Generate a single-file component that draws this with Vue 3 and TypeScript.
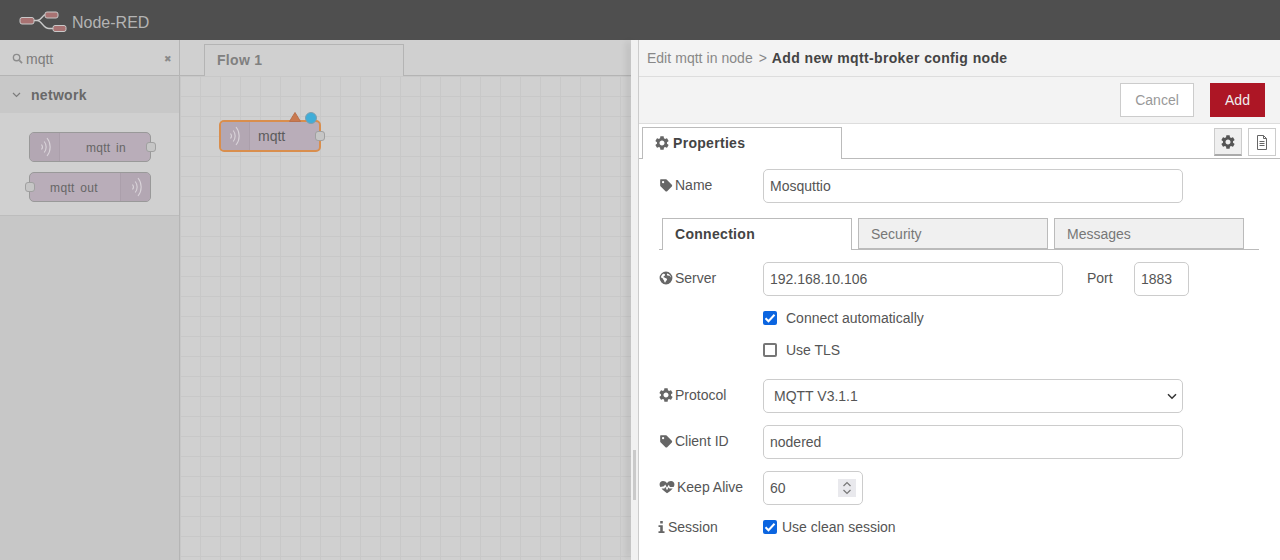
<template>
  <div class="app">
    <header class="topbar">
      <svg class="logo" width="50" height="22" viewBox="0 0 50 22">
        <path d="M15 9.500h3c5 0 5-6 9-6h3M18 9.500c5 0 6 8 12 8h4" fill="none" stroke="#c9c9c9" stroke-width="1.300" />
        <rect x="1" y="6.500" width="14" height="6.500" rx="2" fill="#a87272" stroke="#c9c9c9" stroke-width="1" />
        <rect x="26" y="1" width="13" height="6" rx="2" fill="#a87272" stroke="#c9c9c9" stroke-width="1" />
        <rect x="34" y="14.500" width="13" height="6" rx="2" fill="#a87272" stroke="#c9c9c9" stroke-width="1" />
      </svg>
      <span class="brand">Node-RED</span>
    </header>

    <div class="main">
      <aside class="palette">
        <div class="palette-search">
          <svg width="11" height="11" viewBox="0 0 12 12"><circle cx="5" cy="5" r="3.500" fill="none" stroke="#8c8c8c" stroke-width="1.500" /><path d="M8 8l3 3" stroke="#8c8c8c" stroke-width="1.800" /></svg>
          <span class="search-text">mqtt</span>
          <span class="search-clear">✖</span>
        </div>
        <div class="palette-head">
          <svg width="9" height="6" viewBox="0 0 9 6"><path d="M1 1l3.500 3.500L8 1" fill="none" stroke="#7c7c7c" stroke-width="1.200" /></svg>
          <span>network</span>
        </div>
        <div class="palette-body">
          <div class="pnode">
            <span class="wave-box"><svg class="wave" width="12" height="22" viewBox="0 0 12 22"><path :d="wavePath" /></svg></span>
            <span class="pnode-label pnode-in">mqtt in</span>
            <span class="port port-right"></span>
          </div>
          <div class="pnode">
            <span class="port port-left"></span>
            <span class="pnode-label pnode-out">mqtt out</span>
            <span class="wave-box wave-box-right"><svg class="wave" width="12" height="22" viewBox="0 0 12 22"><path :d="wavePath" /></svg></span>
          </div>
        </div>
      </aside>

      <section class="workspace">
        <div class="ws-tabs"><div class="ws-tab">Flow 1</div></div>
        <div class="canvas">
          <div class="flow-node">
            <span class="wave-box"><svg class="wave" width="12" height="22" viewBox="0 0 12 22"><path :d="wavePath" /></svg></span>
            <span class="flow-label">mqtt</span>
            <span class="port flow-port"></span>
            <svg class="flow-warn" width="12" height="10" viewBox="0 0 12 10"><path d="M6 .5l5.500 9H.5z" fill="#c9794f" stroke="#b8704c" /></svg>
            <span class="flow-dot"></span>
          </div>
        </div>
      </section>

      <div class="splitter"><span class="grip"></span></div>

      <section class="tray">
        <div class="crumbs">
          <span>Edit mqtt in node</span>
          <span class="crumb-sep">&gt;</span>
          <b>Add new mqtt-broker config node</b>
        </div>
        <div class="actions">
          <button class="btn">Cancel</button>
          <button class="btn btn-primary">Add</button>
        </div>
        <div class="tray-tabs">
          <div class="tray-tab">
            <svg class="ico" viewBox="2 2 20 20"><path :d="icons.cog" /></svg>
            Properties
          </div>
          <div class="tray-side">
            <span class="side-btn side-btn-on"><svg class="ico ico-dark" viewBox="2 2 20 20"><path :d="icons.cog" /></svg></span>
            <span class="side-btn">
              <svg width="12" height="15" viewBox="0 0 12 15"><path d="M1.500.5h6l3 3v11h-9zM7.500.5v3h3M3.500 6.500h5M3.500 8.500h5M3.500 10.500h5" fill="none" stroke="#666" /></svg>
            </span>
          </div>
        </div>

        <div class="form">
          <div class="row">
            <label class="lbl"><svg class="ico" viewBox="0 0 24 24"><path :d="icons.tag" fill-rule="evenodd" /></svg>Name</label>
            <input class="field w420" value="Mosquttio" />
          </div>

          <div class="subtabs">
            <div v-for="(t, i) in subTabs" :key="t" class="subtab" :class="{ active: i === 0 }">{{ t }}</div>
          </div>

          <div class="row">
            <label class="lbl"><svg class="ico" viewBox="0 0 24 24"><path :d="icons.globe" fill-rule="evenodd" /></svg>Server</label>
            <input class="field w300" value="192.168.10.106" />
            <span class="port-label">Port</span>
            <input class="field w55" value="1883" />
          </div>

          <div class="check-row first">
            <span class="box on"><svg width="14" height="14" viewBox="0 0 14 14"><path :d="tick" fill="none" stroke="#fff" stroke-width="2" /></svg></span>
            <span>Connect automatically</span>
          </div>
          <div class="check-row">
            <span class="box"></span>
            <span>Use TLS</span>
          </div>

          <div class="row gap-protocol">
            <label class="lbl"><svg class="ico" viewBox="2 2 20 20"><path :d="icons.cog" /></svg>Protocol</label>
            <div class="field w420 select">
              <span>MQTT V3.1.1</span>
              <svg width="10" height="7" viewBox="0 0 10 7"><path d="M1 1.200l4 4 4-4" fill="none" stroke="#333" stroke-width="1.500" /></svg>
            </div>
          </div>
          <div class="row gap12">
            <label class="lbl"><svg class="ico" viewBox="0 0 24 24"><path :d="icons.tag" fill-rule="evenodd" /></svg>Client ID</label>
            <input class="field w420" value="nodered" />
          </div>
          <div class="row gap12">
            <label class="lbl"><svg class="ico ico-wide" viewBox="0 0 28 24"><path :d="icons.heartbeat" /></svg>Keep Alive</label>
            <div class="field w100 number">
              <span>60</span>
              <span class="spin">
                <svg width="10" height="16" viewBox="0 0 10 16"><path d="M1.500 6L5 2.500 8.500 6M1.500 10L5 13.500 8.500 10" fill="none" stroke="#777" stroke-width="1.200" /></svg>
              </span>
            </div>
          </div>
          <div class="row session">
            <label class="lbl"><svg class="ico ico-info" viewBox="0 0 8 14"><path :d="icons.info" /></svg>Session</label>
            <span class="box on"><svg width="14" height="14" viewBox="0 0 14 14"><path :d="tick" fill="none" stroke="#fff" stroke-width="2" /></svg></span>
            <span class="session-text">Use clean session</span>
          </div>
        </div>
      </section>
    </div>
  </div>
</template>

<script setup lang="ts">
const subTabs: string[] = ["Connection", "Security", "Messages"];

const wavePath = "M2.500 8.500c1.200 1.500 1.200 3.500 0 5M5.200 5.500c2.600 3.200 2.600 7.800 0 11M8 2c4.200 5 4.200 13 0 18";
const tick = "M2.500 7.200l3 3 6-6.400";

// icon shapes drawn by hand, same glyphs as the editor uses
const icons: Record<string, string> = {
  cog: "M19.140 12.940c.04-.3.06-.61.06-.94 0-.32-.02-.64-.07-.94l2.030-1.580c.18-.14.23-.41.12-.61l-1.920-3.320c-.12-.22-.37-.29-.59-.22l-2.390.96c-.5-.38-1.030-.7-1.620-.94l-.36-2.540c-.04-.24-.24-.41-.48-.41h-3.840c-.24 0-.43.17-.47.41l-.36 2.540c-.59.24-1.130.57-1.620.94l-2.390-.96c-.22-.08-.47 0-.59.22L2.740 8.870c-.12.21-.08.47.12.61l2.030 1.580c-.05.3-.09.63-.09.94s.02.64.07.94l-2.030 1.580c-.18.14-.23.41-.12.61l1.920 3.320c.12.22.37.29.59.22l2.390-.96c.5.38 1.030.7 1.620.94l.36 2.540c.05.24.24.41.48.41h3.840c.24 0 .44-.17.47-.41l.36-2.540c.59-.24 1.130-.56 1.620-.94l2.390.96c.22.08.47 0 .59-.22l1.920-3.320c.12-.22.07-.47-.12-.61l-2.010-1.580zM12 15.600c-1.980 0-3.600-1.620-3.600-3.600s1.620-3.600 3.600-3.600 3.600 1.620 3.600 3.600-1.620 3.600-3.600 3.600z",
  tag: "M3 2h8.500c.6 0 1.100.2 1.500.6l9 9c.8.8.8 2.100 0 2.900l-8 8c-.8.8-2.100.8-2.900 0l-9-9C2.200 13.100 2 12.600 2 12V3c0-.6.4-1 1-1zM7 5a2 2 0 1 0 0 4 2 2 0 0 0 0-4z",
  globe: "M12 1a11 11 0 1 1 0 22 11 11 0 0 1 0-22zM7 4.500C5 6 3.500 8.500 3.300 11c1.200.2 1.700 1 2.700 1.500 1 .6 1 1.500 1.500 2.500.4 1 1.500 1 1.500 2.500 0 1 .5 2 1.500 2.500.3-1.500 1-2.500 2-3.500 1-1 1.500-1.500 1-3-.4-1-1.500-1.500-3-1.500-1-.5-1.500-1.500-2.500-1-.5-1 0-2 1-2.500 1-.3 1.500-1 1.500-2S9 4.500 7 4.500zM15 4c-.5 1-1.500 1-1.500 2.500s1.500 1.500 2.500 1c.7 1 1.500 1 2.500.5.5 1.500 1 2.500 2 3-.2-3-2.200-5.700-5.500-6.500z",
  heartbeat: "M14 23C9 19 6 16.500 4.500 14.500h5l1.500-3 3 6 3-5 1 2h6c-2 2.500-5 5-10 8.500zM2.500 12C1.500 10.500 1 9 1 7.500 1 4 3.500 1.500 7 1.500c3 0 5.500 1.500 7 4 1.500-2.500 4-4 7-4 3.500 0 6 2.500 6 6 0 1.500-.5 3-1.500 4.500h-6.400l-2-4-3.200 5.500-3-6-2.300 3z",
  info: "M2.500 0h3v3h-3zM.5 5h5v7h2v2H.5v-2h2V7h-2z",
};
</script>

<style scoped>
.app {
  width: 1280px;
  height: 560px;
  overflow: hidden;
  display: flex;
  flex-direction: column;
  font-family: "Liberation Sans", Arial, sans-serif;
  font-size: 14px;
  color: #555;
}

.topbar {
  height: 40px;
  background: #4f4f4f;
  display: flex;
  align-items: center;
  padding: 6px 0 0 20px;
  box-sizing: border-box;
  flex: none;
}
.logo {
  margin-left: -1px;
  margin-top: -2px;
  width: 50px;
}
.brand {
  color: #b4b4b4;
  font-size: 16px;
  margin-left: 3px;
}

.main {
  flex: 1;
  display: flex;
  min-height: 0;
}

/* palette */
.palette {
  width: 180px;
  flex: none;
  box-sizing: border-box;
  background: #c7c7c7;
  border-right: 1px solid #b5b5b5;
}
.palette-search {
  height: 36px;
  box-sizing: border-box;
  background: #d0d0d0;
  border-bottom: 1px solid #b4b4b4;
  display: flex;
  align-items: center;
  padding: 2px 7px 0 12px;
  color: #7c7c7c;
}
.search-text {
  margin-left: 3px;
  flex: 1;
}
.search-clear {
  font-size: 9px;
  color: #8a8a8a;
}
.palette-head {
  height: 37px;
  background: #c8c8c8;
  display: flex;
  align-items: center;
  padding-left: 12px;
  gap: 10px;
  font-weight: 700;
  font-size: 14px;
  color: #696969;
  letter-spacing: .3px;
}
.palette-body {
  height: 103px;
  box-sizing: border-box;
  background: #d0d0d0;
  border-bottom: 1px solid #bdbdbd;
  padding: 19px 0 0 29px;
  display: flex;
  flex-direction: column;
  gap: 10px;
}
.pnode {
  position: relative;
  width: 122px;
  height: 30px;
  box-sizing: border-box;
  background: #b9adb9;
  border: 1px solid #999;
  border-radius: 5px;
  display: flex;
  align-items: center;
  font-size: 12px;
  letter-spacing: .3px;
  word-spacing: 2px;
  color: #666;
}
.pnode-label {
  flex: 1;
  text-align: center;
  margin-top: 1px;
}
.pnode-in {
  padding-left: 32px;
  box-sizing: border-box;
}
.pnode-out {
  padding-right: 2px;
  box-sizing: border-box;
}
.wave-box {
  width: 30px;
  height: 100%;
  flex: none;
  box-sizing: border-box;
  display: flex;
  align-items: center;
  justify-content: center;
  background: #b3a7b3;
  border-right: 1px solid #ab9fab;
  border-radius: 4px 0 0 4px;
}
.wave-box-right {
  border-right: 0;
  border-left: 1px solid #ab9fab;
  border-radius: 0 4px 4px 0;
}
.pnode .wave-box:first-child {
  margin-right: -30px;
}
.wave path {
  fill: none;
  stroke: #d9d3d9;
  stroke-width: 1.100;
}
.port {
  position: absolute;
  width: 10px;
  height: 10px;
  box-sizing: border-box;
  background: #c6c6c6;
  border: 1px solid #a0a0a0;
  border-radius: 3px;
  top: 9px;
}
.port-right { right: -6px; }
.port-left { left: -5px; }

/* workspace */
.workspace {
  flex: 1;
  display: flex;
  flex-direction: column;
  min-width: 0;
}
.ws-tabs {
  height: 36px;
  box-sizing: border-box;
  flex: none;
  background: #d0d0d0;
  border-bottom: 1px solid #b4b4b4;
  padding: 4px 0 0 24px;
}
.ws-tab {
  width: 200px;
  height: 32px;
  box-sizing: border-box;
  background: #d0d0d0;
  border: 1px solid #b4b4b4;
  border-bottom: 0;
  padding: 7px 0 0 12px;
  font-weight: 700;
  color: #808080;
  letter-spacing: .3px;
}
.canvas {
  flex: 1;
  position: relative;
  background-color: #d0d0d0;
  background-image:
    linear-gradient(#c8c8c8 1px, transparent 1px),
    linear-gradient(90deg, #c8c8c8 1px, transparent 1px);
  background-size: 20px 20px;
}
.flow-node {
  position: absolute;
  left: 39px;
  top: 44px;
  width: 102px;
  height: 32px;
  box-sizing: border-box;
  background: #b9adb9;
  border: 2px solid #d98e4d;
  border-radius: 5px;
  display: flex;
  align-items: center;
  color: #5c5c5c;
  font-size: 14px;
}
.flow-node .wave-box {
  width: 29px;
  padding-right: 2px;
}
.flow-label {
  margin-left: 8px;
}
.flow-port {
  top: 9px;
  right: -6px;
}
.flow-warn {
  position: absolute;
  right: 18px;
  top: -10px;
}
.flow-dot {
  position: absolute;
  right: 2px;
  top: -10px;
  width: 12px;
  height: 12px;
  box-sizing: border-box;
  border-radius: 50%;
  background: #3fadd8;
  border: 1px solid #7f9fae;
}

/* strip between canvas and tray */
.splitter {
  width: 8px;
  flex: none;
  box-sizing: border-box;
  background: #f1f1f1;
  border-right: 1px solid #ccc;
  box-shadow: -6px 0 6px -2px rgba(0, 0, 0, .12);
  padding-left: 2px;
  position: relative;
}
.grip {
  display: block;
  width: 3px;
  height: 50px;
  margin-top: 410px;
  background: #cacaca;
}

/* edit tray */
.tray {
  width: 641px;
  flex: none;
  box-sizing: border-box;
  background: #fff;
  display: flex;
  flex-direction: column;
}
.crumbs {
  height: 37px;
  box-sizing: border-box;
  background: #f3f3f3;
  border-bottom: 1px solid #ddd;
  padding: 10px 0 0 8px;
  color: #888;
  word-spacing: .2px;
}
.crumb-sep {
  margin: 0 5px 0 6px;
}
.crumbs b {
  color: #444;
  letter-spacing: .35px;
}
.actions {
  height: 47px;
  box-sizing: border-box;
  background: #f3f3f3;
  border-bottom: 1px solid #ddd;
  display: flex;
  justify-content: flex-end;
  align-items: flex-start;
  gap: 16px;
  padding: 6px 15px 0 0;
}
.btn {
  height: 34px;
  width: 74px;
  box-sizing: border-box;
  background: #fff;
  border: 1px solid #ccc;
  font: inherit;
  color: #999;
}
.btn-primary {
  width: 55px;
  background: #ad1625;
  border-color: #ad1625;
  color: #eee;
}
.tray-tabs {
  height: 35px;
  box-sizing: border-box;
  flex: none;
  border-bottom: 1px solid #bbb;
  padding: 3px 4px 0 3px;
  display: flex;
  justify-content: space-between;
}
.tray-tab {
  width: 200px;
  height: 32px;
  box-sizing: border-box;
  background: #fff;
  border: 1px solid #bbb;
  border-bottom: 0;
  display: flex;
  align-items: center;
  padding: 0 0 2px 12px;
  gap: 4px;
  font-weight: 700;
  letter-spacing: .3px;
  color: #444;
}
.tray-side {
  display: flex;
  gap: 6px;
  padding-top: 1px;
}
.side-btn {
  width: 28px;
  height: 28px;
  box-sizing: border-box;
  border: 1px solid #ccc;
  display: flex;
  align-items: center;
  justify-content: center;
}
.side-btn-on {
  background: #efefef;
  border-bottom: 2px solid #aaa;
}

.ico {
  width: 14px;
  height: 14px;
  fill: #666;
  flex: none;
}
.ico-dark { fill: #555; }
.ico-wide { width: 16px; }
.ico-info { width: 7px; height: 12px; margin-left: -1px; }

.form {
  padding: 10px 0 0 20px;
  color: #555;
}
.row {
  display: flex;
  align-items: flex-start;
}
.lbl {
  width: 104px;
  flex: none;
  display: flex;
  align-items: center;
  gap: 2px;
  height: 32px;
  color: #555;
}
.field {
  height: 34px;
  box-sizing: border-box;
  border: 1px solid #ccc;
  border-radius: 5px;
  padding: 0 6px 1px;
  font: inherit;
  color: #555;
  background: #fff;
  outline: 0;
}
.w420 { width: 420px; }
.w300 { width: 300px; }
.w100 { width: 100px; }
.w55 { width: 55px; }
.port-label {
  margin: 8px 0 0 24px;
  width: 47px;
}
.subtabs {
  display: flex;
  gap: 6px;
  margin: 15px 21px 12px 0;
  padding-left: 3px;
  border-bottom: 1px solid #bbb;
  height: 31px;
  box-sizing: content-box;
}
.subtab {
  width: 190px;
  height: 31px;
  box-sizing: border-box;
  border: 1px solid #bbb;
  background: #f0f0f0;
  padding: 7px 0 0 12px;
  color: #777;
}
.subtab.active {
  height: 32px;
  background: #fff;
  border-bottom: 0;
  font-weight: 700;
  letter-spacing: .3px;
  color: #444;
}
.check-row {
  display: flex;
  align-items: center;
  gap: 9px;
  height: 32px;
  margin-left: 104px;
}
.check-row.first {
  margin-top: 6px;
}
.box {
  width: 14px;
  height: 14px;
  box-sizing: border-box;
  border: 2px solid #767676;
  border-radius: 2px;
  background: #fff;
  flex: none;
  display: flex;
}
.box.on {
  background: #0b65e0;
  border: 0;
}
.gap-protocol { margin-top: 13px; }
.gap12 { margin-top: 12px; }
.select {
  display: flex;
  align-items: center;
  justify-content: space-between;
  padding: 0 5px 0 10px;
}
.number {
  display: flex;
  align-items: center;
  justify-content: space-between;
  padding: 0 6px 0 6px;
}
.spin {
  width: 18px;
  height: 18px;
  background: #e9e9ed;
  display: flex;
  align-items: center;
  justify-content: center;
}
.session {
  margin-top: 6px;
  align-items: center;
}
.session .lbl {
  gap: 3px;
}
.session-text {
  margin-left: 5px;
}
</style>

<style>
html, body {
  margin: 0;
  background: #fff;
}
</style>
